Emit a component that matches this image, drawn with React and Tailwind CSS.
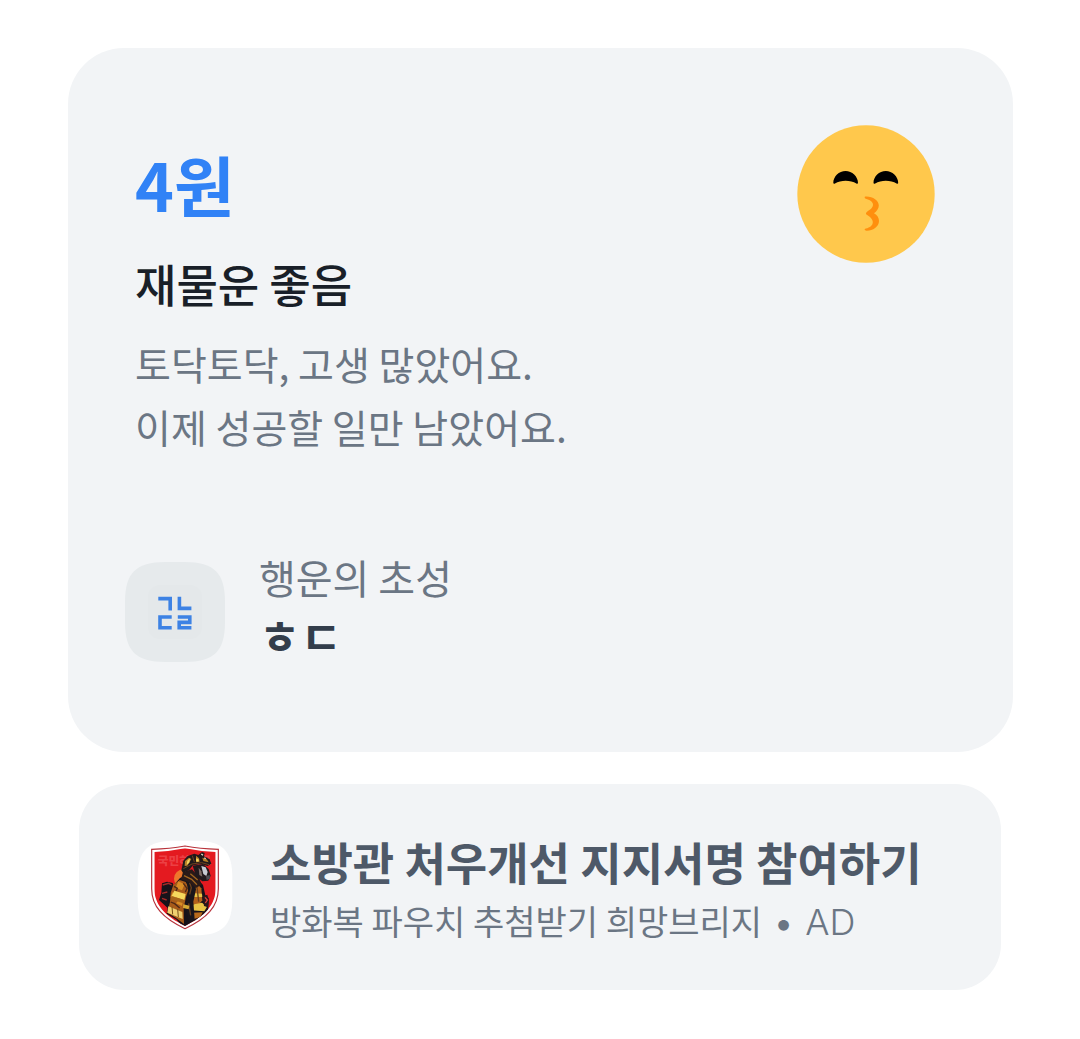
function KissingFace() {
  return (
    <svg viewBox="0 0 138 138" className="w-[138px] shrink-0" role="img" aria-label="웃으며 뽀뽀하는 얼굴">
      <circle cx="69" cy="69" r="68.7" fill="#ffc84c" />
      <path d="M36.3 58C36.3 51.5 42 46 48.6 46C55 46 61 51.5 61 58C61 58.8 60 58.9 59.4 58.5C56.5 56.6 52.5 55.8 48.6 55.8C44.8 55.8 41 56.6 38 58.5C37.3 58.9 36.3 58.8 36.3 58Z" />
      <path d="M76.5 58C76.5 51.5 82.2 46 88.8 46C95.2 46 101.2 51.5 101.2 58C101.2 58.8 100.2 58.9 99.6 58.5C96.7 56.6 92.7 55.8 88.8 55.8C85 55.8 81.2 56.6 78.2 58.5C77.5 58.9 76.5 58.8 76.5 58Z" />
      <path
        d="M68.5 71.6C75.5 71.2 81.8 75.4 81.8 80.5C81.8 83.7 79.7 86.3 77 88.2C80.2 90 82 92.8 82 96C82 101.7 75.5 106 69.5 105.8C67.3 105.7 67 104 68.8 103.6C73 102.7 75.8 100.4 75.8 97.3C75.8 93.9 72.8 91.7 69.8 89.8C68.7 89.1 68.7 87.6 69.8 86.9C73 85 76 82.8 76 79.6C76 76.7 72.7 74.6 68.8 73.7C67.4 73.3 67.2 71.8 68.5 71.6Z"
        fill="#ff8f0e"
      />
    </svg>
  );
}

function ConsonantIcon() {
  return (
    <svg viewBox="0 0 100 100" className="w-[100px] shrink-0" aria-hidden="true">
      <path
        d="M40 0H60C89 0 100 11 100 40V60C100 89 89 100 60 100H40C11 100 0 89 0 60V40C0 11 11 0 40 0Z"
        fill="#e6eaec"
      />
      <rect x="23" y="23" width="54" height="54" rx="12" fill="#e4e8ea" />
      <g fill="none" stroke="#3d82e4" strokeWidth="3.6">
        <path d="M33.3 36.6H45.2V48.4M54.4 34.8V46.4H66.4" />
        <path d="M46.7 55H35V65.8H46.7M52.8 55H64.8V60.4H54.2V65.8H66.4" />
      </g>
    </svg>
  );
}

function FirefighterLogo() {
  return (
    <svg viewBox="83 60 288 288" className="mt-[10px] w-24 shrink-0" role="img" aria-label="국민히어로">
      <defs>
        <clipPath id="shield">
          <path d="M135 96Q184 94 227 85Q270 94 319 96V205C319 254 288 288 227 318C166 288 135 254 135 205Z" />
        </clipPath>
      </defs>
      <path
        d="M197 62H257C340 62 369 91 369 174V234C369 317 340 346 257 346H197C114 346 85 317 85 234V174C85 91 114 62 197 62Z"
        fill="#fff"
      />
      <path
        d="M127 88Q183 86 227 78Q271 86 327 88V206C327 259 293 295 227 326C161 295 127 259 127 206Z"
        fill="#fff"
        stroke="#b8323b"
        strokeWidth="3.5"
      />
      <g clipPath="url(#shield)">
        <rect x="127" y="78" width="200" height="250" fill="#e41a20" />
        <text x="145" y="135" fontSize="35" fontWeight="900" fill="#ec4044" className="font-['Noto_Sans_CJK_KR',sans-serif]">
          국민히어로
        </text>
        <circle cx="222" cy="176" r="28" fill="#ee762c" />
        {/* air tank */}
        <path d="M158 190L173 185L190 189L197 205L190 245L179 268L162 252L149 240L156 218Z" fill="#17131a" />
        <path d="M160 195L178 190L187 195M158 220L174 216M158 235L172 240" stroke="#a52a27" strokeWidth="4" fill="none" />
        {/* coat */}
        <path d="M212 174L238 162L262 174L281 195L288 226L298 235L296 284L252 311L221 322L202 299L172 281L179 241L186 203Z" fill="#17121a" />
        <path d="M211 180L229 186L239 203L230 231L223 265L224 312L199 293L174 278L182 246L184 218L192 194Z" fill="#a85b1a" />
        <path d="M207 184L226 193L218 211L199 204ZM190 216L204 230L194 238L184 230ZM209 239L222 241L218 258L200 250Z" fill="#d98d26" />
        <path d="M194 199L204 205L200 213M222 190L233 205L228 216M184 246L196 251L211 264" stroke="#4d2817" strokeWidth="4" fill="none" />
        <path d="M195 212L229 222L225 240L187 228Z" fill="#f5d85d" />
        <path d="M187 228L224 240L222 250L184 238Z" fill="#a8651a" />
        <path d="M177 259L219 276L220 297L174 278Z" fill="#f0d071" />
        <path d="M188 260L190 283M205 267L207 291" stroke="#775017" strokeWidth="3" />
        {/* chest and straps */}
        <path d="M243 196L262 190L276 205L279 241L266 257L244 249Z" fill="#b3621b" />
        <path d="M247 219L278 221L279 231L247 231ZM242 255L278 248L293 260L285 274L247 271Z" fill="#e8c345" />
        <path d="M247 278L280 277L273 291L247 299Z" fill="#b76a1c" />
        <path d="M231 181L251 179L260 208L252 245L256 299L239 305L228 258L237 216Z" fill="#19151b" />
        <path d="M241 188L246 203L241 223M263 201L268 245M238 250L244 286" stroke="#69401d" strokeWidth="4" fill="none" />
        <path d="M222 253L240 257L238 268L221 264Z" fill="#d6a934" />
        <path d="M280 229L294 224L299 242L296 262L284 258Z" fill="#2b171b" />
        <path d="M287 232L294 240L288 249" stroke="#dc4337" strokeWidth="4" fill="none" />
        <path d="M221 156L248 148L269 172L277 194L259 204L239 187L215 178Z" fill="#2a1a18" />
        <path d="M224 167L247 178L263 194M243 161L265 180" stroke="#a16620" strokeWidth="4" fill="none" />
        {/* mask */}
        <path d="M250 137L281 132L298 147L304 167L297 182L279 184L260 169Z" fill="#21191c" />
        <path d="M276 138L289 142L295 156L291 168L282 162Z" fill="#c8cbd2" />
        <path d="M268 143L276 154L279 170L270 165Z" fill="#7d6a63" />
        <path d="M290 168L301 165L302 176L292 180Z" fill="#4d4b51" />
      </g>
      {/* helmet */}
      <path d="M216 151L222 122L235 108L255 101L267 105L278 96L286 99L284 109L301 118L306 131L295 138L275 132L251 136L239 151L221 158Z" fill="#21191a" />
      <path d="M227 123L239 113L246 117L234 137L226 138ZM260 107L269 115L271 125L260 127ZM279 113L292 118L298 127L282 123Z" fill="#b78028" />
      <path d="M234 122L242 115L240 128L232 134ZM261 115L269 119L267 125L260 124Z" fill="#f4d561" />
      <path d="M249 107L255 126M222 146L248 132L277 128L299 134" stroke="#70431f" strokeWidth="3" fill="none" />
      <path d="M276 102L281 106M285 113L289 116" stroke="#e8dfcc" strokeWidth="4" />
    </svg>
  );
}

export default function App() {
  return (
    <main className="py-12 pr-[67px] pl-[68px] font-['Noto_Sans_CJK_KR',sans-serif]">
      <section className="rounded-[56px] bg-[#f2f4f6] pt-[77px] pr-[78px] pb-[76px] pl-[57px]">
        <div className="flex items-start justify-between">
          <div className="pt-[14px] pl-[10px]">
            <p className="text-[66px] leading-[88px] font-bold text-[#3182f6]">4원</p>
            <h1 className="mt-[27px] text-[45px] leading-[60px] font-medium text-[#191f28]">재물운 좋음</h1>
            <p className="mt-[18px] text-[39px] leading-[63px] text-[#6b7684]">
              토닥토닥, 고생 많았어요.
              <br />
              이제 성공할 일만 남았어요.
            </p>
          </div>
          <KissingFace />
        </div>
        <div className="mt-[90px] flex items-center gap-[34px]">
          <ConsonantIcon />
          <dl className="pb-[10px]">
            <dt className="text-[40px] leading-[58px] text-[#6b7684]">행운의 초성</dt>
            <dd className="text-[45px] leading-[60px] font-bold text-[#333d4b]">ㅎㄷ</dd>
          </dl>
        </div>
      </section>

      <a href="#ad" className="mr-3 ml-[11px] mt-8 flex items-start gap-[37px] rounded-[46px] bg-[#f2f4f6] px-[58px] pt-[46px] pb-[38px]">
        <FirefighterLogo />
        <div className="pt-[2px]">
          <h2 className="text-[45px] leading-[60px] font-bold text-[#4e5968]">소방관 처우개선 지지서명 참여하기</h2>
          <p className="flex items-baseline gap-3 text-[34px] leading-[58px] text-[#6b7684]">
            <span>방화복 파우치 추첨받기 희망브리지</span>
            <span className="font-['Inter',sans-serif]">•</span>
            <span className="font-['Inter',sans-serif] text-[36px] font-light">AD</span>
          </p>
        </div>
      </a>
    </main>
  );
}
